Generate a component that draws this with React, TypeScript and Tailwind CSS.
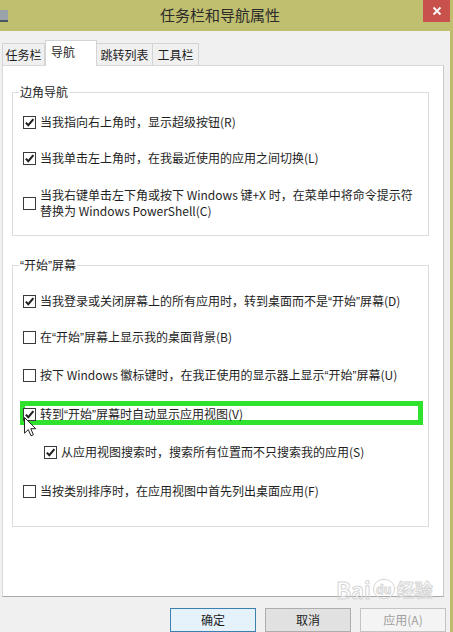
import React from "react";

function Box({ checked }: { checked: boolean }) {
  return (
    <span className="relative z-10 flex h-[13px] w-[13px] shrink-0 items-center justify-center border border-[#3a3a3a] bg-white">
      {checked && (
        <svg width="11" height="11" viewBox="0 0 11 11">
          <path d="M1.8 5.6 L4.3 8.2 L9.4 2.2" fill="none" stroke="#1f1f1f" strokeWidth="2" />
        </svg>
      )}
    </span>
  );
}

function Q({ c }: { c: string }) {
  return <span className="font-['Liberation_Sans',sans-serif]">{c}</span>;
}

function Row({
  checked,
  children,
  className = "",
  lh = "leading-[18px]",
  overlay,
}: {
  checked: boolean;
  children: React.ReactNode;
  className?: string;
  lh?: string;
  overlay?: React.ReactNode;
}) {
  return (
    <div className={"relative flex items-center gap-[4px] text-[12px] text-[#1e1e1e] " + lh + " " + className}>
      {overlay}
      <Box checked={checked} />
      <span className="relative z-10">{children}</span>
    </div>
  );
}

export default function App() {
  return (
    <div className="relative h-[632px] w-[453px] overflow-hidden bg-[#f0f0f0] font-['Noto_Sans_CJK_SC','Noto_Sans',sans-serif]">
      {/* title bar */}
      <div className="flex h-[31px] bg-[#c0bf6f]">
        <div className="mt-[10px] h-[12px] w-[8px] border-b-2 border-[#4a5560] bg-[#9aa3aa]" />
        <div className="flex-1 pl-[9px] pt-[4px] text-center text-[15px] leading-[22px] text-[#2b2b2b]">
          任务栏和导航属性
        </div>
        <div className="mr-[3px] flex h-[22px] w-[27px] items-center justify-center bg-[#c9514c]">
          <svg width="10" height="10" viewBox="0 0 10 10">
            <path d="M1.5 1.5 L8.5 8.5 M8.5 1.5 L1.5 8.5" stroke="#fff" strokeWidth="1.8" />
          </svg>
        </div>
      </div>

      <div className="flex h-[601px]">
        <div className="flex w-[450px] flex-col pt-[9px]">
          {/* tabs */}
          <div className="flex h-[25px] items-end pl-[2px] text-[12px] text-[#1e1e1e]">
            <div className="flex h-[22px] w-[43px] items-center justify-center border border-b-0 border-[#d4d4d4] bg-[#f0f0f0]">
              任务栏
            </div>
            <div className="relative z-10 -mb-[1px] flex h-[26px] w-[52px] items-start border border-b-0 border-[#d4d4d4] bg-white pl-[5px] pt-[2px]">
              导航
            </div>
            <div className="flex h-[22px] w-[56px] items-center justify-center border border-b-0 border-l-0 border-[#d4d4d4] bg-[#f0f0f0]">
              跳转列表
            </div>
            <div className="flex h-[22px] w-[46px] items-center justify-center border border-b-0 border-l-0 border-[#d4d4d4] bg-[#f0f0f0]">
              工具栏
            </div>
          </div>

          {/* panel */}
          <div className="relative ml-[2px] h-[544px] w-[442px] border border-b-[#a8a8a8] border-l-[#d9d9d9] border-r-[#c8c8c8] border-t-[#d9d9d9] bg-white">
            <fieldset className="ml-[9px] mt-[17px] w-[417px] border border-[#dcdcdc] p-0">
              <legend className="ml-[6px] px-[1px] text-[12px] leading-[18px] text-[#1e1e1e]">边角导航</legend>
              <div className="pb-[16px] pl-[10px]">
                <Row checked className="mt-[12px]">当我指向右上角时，显示超级按钮(R)</Row>
                <Row checked className="mt-[18px]">当我单击左上角时，在我最近使用的应用之间切换(L)</Row>
                <Row checked={false} className="mt-[20px]" lh="leading-[16px]">
                  当我右键单击左下角或按下 Windows 键+X 时，在菜单中将命令提示符
                  <br />
                  替换为 Windows PowerShell(C)
                </Row>
              </div>
            </fieldset>

            <fieldset className="ml-[9px] mt-[20px] w-[417px] border border-[#dcdcdc] p-0">
              <legend className="ml-[6px] px-[1px] text-[12px] leading-[18px] text-[#1e1e1e]">
                <Q c="“" />开始<Q c="”" />屏幕
              </legend>
              <div className="pb-[26px] pl-[10px]">
                <Row checked className="mt-[17px]">
                  当我登录或关闭屏幕上的所有应用时，转到桌面而不是<Q c="“" />开始<Q c="”" />屏幕(D)
                </Row>
                <Row checked={false} className="mt-[17px]">
                  在<Q c="“" />开始<Q c="”" />屏幕上显示我的桌面背景(B)
                </Row>
                <Row checked={false} className="mt-[19px]">
                  按下 Windows 徽标键时，在我正使用的显示器上显示<Q c="“" />开始<Q c="”" />屏幕(U)
                </Row>
                <Row
                  checked
                  className="mt-[20px]"
                  overlay={
                    <span className="pointer-events-none absolute left-[-3px] top-[-4px] h-[24px] w-[403px] border-[5px] border-[#2ee22e]" />
                  }
                >
                  转到<Q c="“" />开始<Q c="”" />屏幕时自动显示应用视图(V)
                </Row>
                <div className="relative">
                  <svg className="absolute left-[1px] top-[-7px] z-20" width="13" height="20" viewBox="0 0 13 20">
                    <path
                      d="M0.5 0.5 L0.5 16.2 L4.3 12.6 L7 18.8 L9.4 17.8 L6.8 11.7 L11.8 11.7 Z"
                      fill="#fff"
                      stroke="#222"
                      strokeWidth="1"
                      strokeLinejoin="round"
                    />
                  </svg>
                </div>
                <Row checked className="ml-[21px] mt-[19px]">从应用视图搜索时，搜索所有位置而不只搜索我的应用(S)</Row>
                <Row checked={false} className="mt-[21px]">当按类别排序时，在应用视图中首先列出桌面应用(F)</Row>
              </div>
            </fieldset>

            {/* watermark */}
            <div className="absolute left-[333px] top-[511px] flex items-center gap-[2px] text-[22px] font-bold leading-[24px] text-transparent [-webkit-text-stroke:1px_#d6d6d6]">
              <span>Bai</span>
              <span className="flex h-[20px] w-[22px] items-center justify-center rounded-full border border-[#d6d6d6] text-[12px] leading-[12px]">
                du
              </span>
              <span className="text-[18px]">经验</span>
            </div>
          </div>

          {/* buttons */}
          <div className="flex justify-end gap-[9px] pr-[4px] pt-[11px] text-[12px]">
            <div className="flex h-[24px] w-[86px] items-center justify-center border border-[#3c7fb1] bg-[#e5f1fb] text-[#1e1e1e]">
              确定
            </div>
            <div className="flex h-[24px] w-[86px] items-center justify-center border border-[#adadad] bg-[#e1e1e1] text-[#1e1e1e]">
              取消
            </div>
            <div className="flex h-[24px] w-[86px] items-center justify-center border border-[#c4c4c4] bg-[#f4f4f4] text-[#a0a0a0]">
              应用(A)
            </div>
          </div>
        </div>
        <div className="w-[3px] bg-[#bdbc6a]" />
      </div>
    </div>
  );
}
